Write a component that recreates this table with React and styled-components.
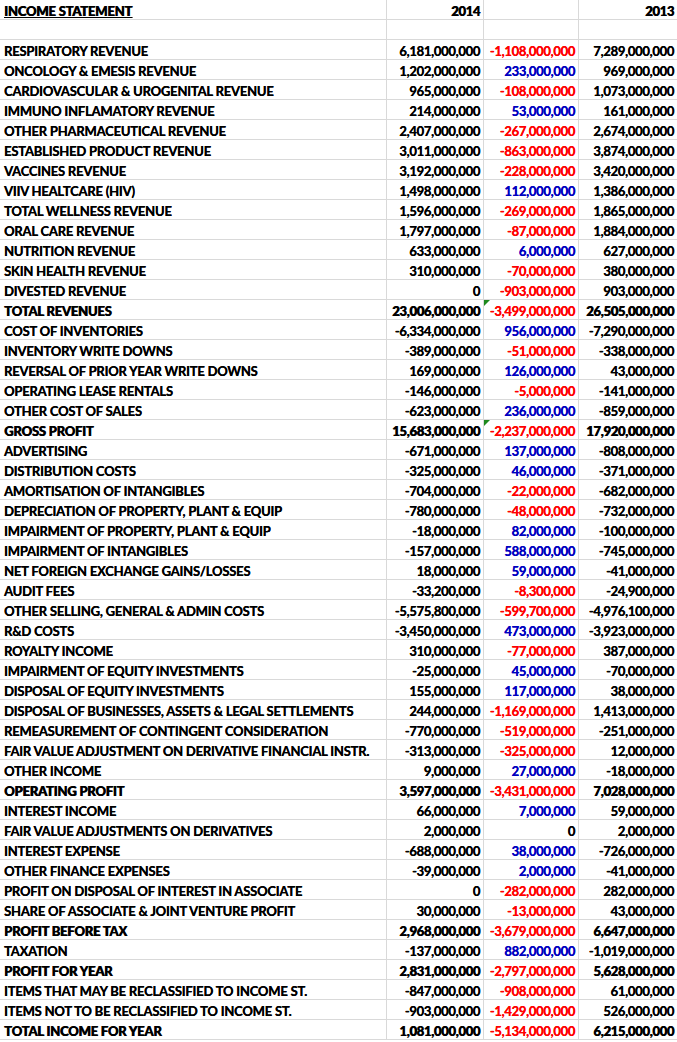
import React from 'react';
import styled, { createGlobalStyle } from 'styled-components';

const GlobalStyle = createGlobalStyle`
  html, body {
    margin: 0;
    padding: 0;
    background: #ffffff;
  }
`;

const Sheet = styled.div`
  display: grid;
  grid-template-columns: 387px 97px 95px 98px;
  grid-auto-rows: 20px;
  width: 677px;
  font-family: Lato, "Open Sans", sans-serif;
  font-size: 13px;
  color: #000;
`;

const Cell = styled.div`
  position: relative;
  box-sizing: border-box;
  border-right: 1px solid #d9d9d9;
  border-bottom: 1px solid #d9d9d9;
  padding: 2px 3px 0 4px;
  line-height: 18px;
  white-space: nowrap;
  overflow: visible;
  text-align: ${p => (p.$num ? 'right' : 'left')};
  font-weight: ${p => (p.$bold ? 900 : 700)};
  color: ${p => p.$color || '#000'};
  text-decoration: ${p => (p.$underline ? 'underline' : 'none')};
  text-shadow: ${p => (p.$bold ? '0.6px 0 0 currentColor' : '0.15px 0 0 currentColor')};
  letter-spacing: ${p => (p.$num ? '-0.3px' : '-0.2px')};

  &:nth-child(4n) {
    border-right: none;
  }
`;

const Flag = styled.span`
  position: absolute;
  top: 0;
  left: 0;
  width: 0;
  height: 0;
  border-top: 6px solid #1e8a1e;
  border-right: 6px solid transparent;
`;

const rows = [
  ['RESPIRATORY REVENUE', '6,181,000,000', '-1,108,000,000', '7,289,000,000'],
  ['ONCOLOGY & EMESIS REVENUE', '1,202,000,000', '233,000,000', '969,000,000'],
  ['CARDIOVASCULAR & UROGENITAL REVENUE', '965,000,000', '-108,000,000', '1,073,000,000'],
  ['IMMUNO INFLAMATORY REVENUE', '214,000,000', '53,000,000', '161,000,000'],
  ['OTHER PHARMACEUTICAL REVENUE', '2,407,000,000', '-267,000,000', '2,674,000,000'],
  ['ESTABLISHED PRODUCT REVENUE', '3,011,000,000', '-863,000,000', '3,874,000,000'],
  ['VACCINES REVENUE', '3,192,000,000', '-228,000,000', '3,420,000,000'],
  ['VIIV HEALTCARE (HIV)', '1,498,000,000', '112,000,000', '1,386,000,000'],
  ['TOTAL WELLNESS REVENUE', '1,596,000,000', '-269,000,000', '1,865,000,000'],
  ['ORAL CARE REVENUE', '1,797,000,000', '-87,000,000', '1,884,000,000'],
  ['NUTRITION REVENUE', '633,000,000', '6,000,000', '627,000,000'],
  ['SKIN HEALTH REVENUE', '310,000,000', '-70,000,000', '380,000,000'],
  ['DIVESTED REVENUE', '0', '-903,000,000', '903,000,000'],
  ['TOTAL REVENUES', '23,006,000,000', '-3,499,000,000', '26,505,000,000', true, true],
  ['COST OF INVENTORIES', '-6,334,000,000', '956,000,000', '-7,290,000,000'],
  ['INVENTORY WRITE DOWNS', '-389,000,000', '-51,000,000', '-338,000,000'],
  ['REVERSAL OF PRIOR YEAR WRITE DOWNS', '169,000,000', '126,000,000', '43,000,000'],
  ['OPERATING LEASE RENTALS', '-146,000,000', '-5,000,000', '-141,000,000'],
  ['OTHER COST OF SALES', '-623,000,000', '236,000,000', '-859,000,000'],
  ['GROSS PROFIT', '15,683,000,000', '-2,237,000,000', '17,920,000,000', true, true],
  ['ADVERTISING', '-671,000,000', '137,000,000', '-808,000,000'],
  ['DISTRIBUTION COSTS', '-325,000,000', '46,000,000', '-371,000,000'],
  ['AMORTISATION OF INTANGIBLES', '-704,000,000', '-22,000,000', '-682,000,000'],
  ['DEPRECIATION OF PROPERTY, PLANT & EQUIP', '-780,000,000', '-48,000,000', '-732,000,000'],
  ['IMPAIRMENT OF PROPERTY, PLANT & EQUIP', '-18,000,000', '82,000,000', '-100,000,000'],
  ['IMPAIRMENT OF INTANGIBLES', '-157,000,000', '588,000,000', '-745,000,000'],
  ['NET FOREIGN EXCHANGE GAINS/LOSSES', '18,000,000', '59,000,000', '-41,000,000'],
  ['AUDIT FEES', '-33,200,000', '-8,300,000', '-24,900,000'],
  ['OTHER SELLING, GENERAL & ADMIN COSTS', '-5,575,800,000', '-599,700,000', '-4,976,100,000'],
  ['R&D COSTS', '-3,450,000,000', '473,000,000', '-3,923,000,000'],
  ['ROYALTY INCOME', '310,000,000', '-77,000,000', '387,000,000'],
  ['IMPAIRMENT OF EQUITY INVESTMENTS', '-25,000,000', '45,000,000', '-70,000,000'],
  ['DISPOSAL OF EQUITY INVESTMENTS', '155,000,000', '117,000,000', '38,000,000'],
  ['DISPOSAL OF BUSINESSES, ASSETS & LEGAL SETTLEMENTS', '244,000,000', '-1,169,000,000', '1,413,000,000'],
  ['REMEASUREMENT OF CONTINGENT CONSIDERATION', '-770,000,000', '-519,000,000', '-251,000,000'],
  ['FAIR VALUE ADJUSTMENT ON DERIVATIVE FINANCIAL INSTR.', '-313,000,000', '-325,000,000', '12,000,000'],
  ['OTHER INCOME', '9,000,000', '27,000,000', '-18,000,000'],
  ['OPERATING PROFIT', '3,597,000,000', '-3,431,000,000', '7,028,000,000', true],
  ['INTEREST INCOME', '66,000,000', '7,000,000', '59,000,000'],
  ['FAIR VALUE ADJUSTMENTS ON DERIVATIVES', '2,000,000', '0', '2,000,000'],
  ['INTEREST EXPENSE', '-688,000,000', '38,000,000', '-726,000,000'],
  ['OTHER FINANCE EXPENSES', '-39,000,000', '2,000,000', '-41,000,000'],
  ['PROFIT ON DISPOSAL OF INTEREST IN ASSOCIATE', '0', '-282,000,000', '282,000,000'],
  ['SHARE OF ASSOCIATE & JOINT VENTURE PROFIT', '30,000,000', '-13,000,000', '43,000,000'],
  ['PROFIT BEFORE TAX', '2,968,000,000', '-3,679,000,000', '6,647,000,000', true],
  ['TAXATION', '-137,000,000', '882,000,000', '-1,019,000,000'],
  ['PROFIT FOR YEAR', '2,831,000,000', '-2,797,000,000', '5,628,000,000', true],
  ['ITEMS THAT MAY BE RECLASSIFIED TO INCOME ST.', '-847,000,000', '-908,000,000', '61,000,000'],
  ['ITEMS NOT TO BE RECLASSIFIED TO INCOME ST.', '-903,000,000', '-1,429,000,000', '526,000,000'],
  ['TOTAL INCOME FOR YEAR', '1,081,000,000', '-5,134,000,000', '6,215,000,000', true],
];

const changeColor = v => {
  if (v === '0') return '#000';
  return v.startsWith('-') ? '#ff0000' : '#0000c0';
};

export default function App() {
  return (
    <>
      <GlobalStyle />
      <Sheet>
        <Cell $bold $underline>INCOME STATEMENT</Cell>
        <Cell $num $bold>2014</Cell>
        <Cell $num />
        <Cell $num $bold>2013</Cell>

        <Cell />
        <Cell $num />
        <Cell $num />
        <Cell $num />

        {rows.map(([label, y14, diff, y13, bold, flag]) => (
          <React.Fragment key={label}>
            <Cell $bold={bold}>{label}</Cell>
            <Cell $num $bold={bold}>{y14}</Cell>
            <Cell $num $color={changeColor(diff)}>
              {flag && <Flag />}
              {diff}
            </Cell>
            <Cell $num $bold={bold}>{y13}</Cell>
          </React.Fragment>
        ))}
      </Sheet>
    </>
  );
}
